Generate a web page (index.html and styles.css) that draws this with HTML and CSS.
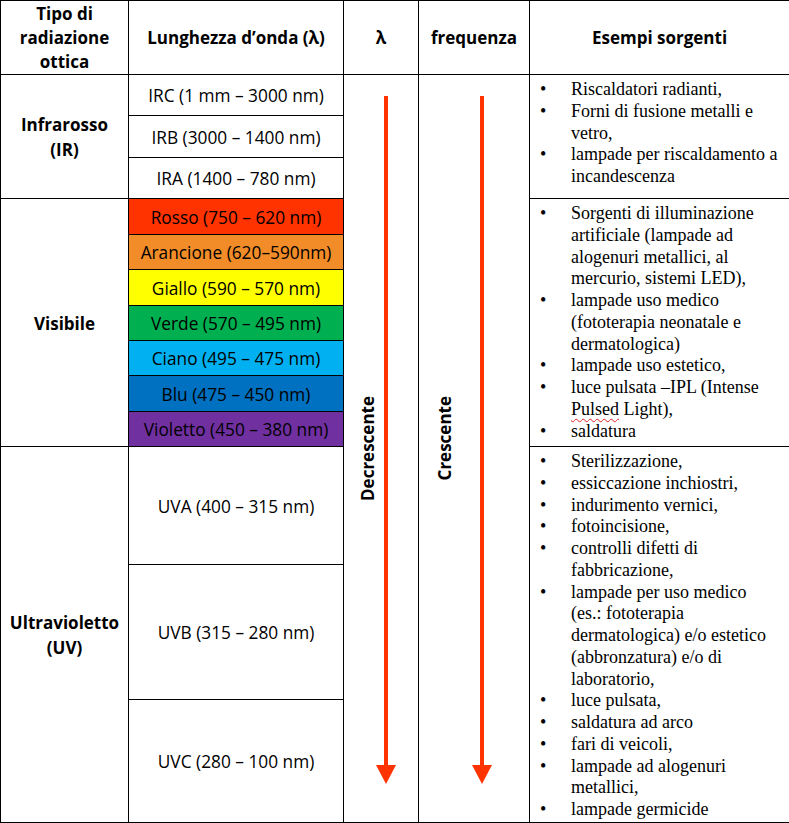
FILE: index.html
```html
<!DOCTYPE html>
<html lang="it">
<head>
<meta charset="utf-8">
<title>Radiazione ottica</title>
<link rel="stylesheet" href="styles.css">
</head>
<body>
<table class="tbl">
  <colgroup>
    <col class="c1"><col class="c2"><col class="c3"><col class="c4"><col class="c5">
  </colgroup>
  <tr class="h-head">
    <th class="head">Tipo di<br>radiazione<br>ottica</th>
    <th class="head">Lunghezza d’onda (λ)</th>
    <th class="head">λ</th>
    <th class="head">frequenza</th>
    <th class="head">Esempi sorgenti</th>
  </tr>
  <tr class="h-ir1">
    <td class="type" rowspan="3">Infrarosso<br>(IR)</td>
    <td class="wl">IRC (1 mm – 3000 nm)</td>
    <td class="dir" rowspan="13">
      <div class="dir-box dir-lambda">
        <span class="vtext">Decrescente</span>
        <svg class="arrow" width="20" height="688" viewBox="0 0 20 688"><rect x="8" y="0" width="4" height="670" fill="#ff3300"/><polygon points="0,669 20,669 10,688" fill="#ff3300"/></svg>
      </div>
    </td>
    <td class="dir" rowspan="13">
      <div class="dir-box dir-freq">
        <span class="vtext vtext-freq">Crescente</span>
        <svg class="arrow" width="20" height="688" viewBox="0 0 20 688"><rect x="8" y="0" width="4" height="670" fill="#ff3300"/><polygon points="0,669 20,669 10,688" fill="#ff3300"/></svg>
      </div>
    </td>
    <td class="src" rowspan="3">
      <ul class="list">
        <li><span>Riscaldatori radianti,</span></li>
        <li><span>Forni di fusione metalli e<br>vetro,</span></li>
        <li><span>lampade per riscaldamento a<br>incandescenza</span></li>
      </ul>
    </td>
  </tr>
  <tr class="h-ir2"><td class="wl">IRB (3000 – 1400 nm)</td></tr>
  <tr class="h-ir3"><td class="wl">IRA (1400 – 780 nm)</td></tr>
  <tr class="h-v36">
    <td class="type" rowspan="7">Visibile</td>
    <td class="wl rosso">Rosso (750 – 620 nm)</td>
    <td class="src" rowspan="7">
      <ul class="list">
        <li><span>Sorgenti di illuminazione<br>artificiale (lampade ad<br>alogenuri metallici, al<br>mercurio, sistemi LED),</span></li>
        <li><span>lampade uso medico<br>(fototerapia neonatale e<br>dermatologica)</span></li>
        <li><span>lampade uso estetico,</span></li>
        <li><span>luce pulsata –IPL (Intense<br><span class="spell">Pulsed</span> Light),</span></li>
        <li><span>saldatura</span></li>
      </ul>
    </td>
  </tr>
  <tr class="h-v35"><td class="wl arancione">Arancione (620–590nm)</td></tr>
  <tr class="h-v36"><td class="wl giallo">Giallo (590 – 570 nm)</td></tr>
  <tr class="h-v35"><td class="wl verde">Verde (570 – 495 nm)</td></tr>
  <tr class="h-v35"><td class="wl ciano">Ciano (495 – 475 nm)</td></tr>
  <tr class="h-v36"><td class="wl blu">Blu (475 – 450 nm)</td></tr>
  <tr class="h-v35"><td class="wl violetto">Violetto (450 – 380 nm)</td></tr>
  <tr class="h-uva">
    <td class="type" rowspan="3">Ultravioletto<br>(UV)</td>
    <td class="wl">UVA (400 – 315 nm)</td>
    <td class="src" rowspan="3">
      <ul class="list">
        <li><span>Sterilizzazione,</span></li>
        <li><span>essiccazione inchiostri,</span></li>
        <li><span>indurimento vernici,</span></li>
        <li><span>fotoincisione,</span></li>
        <li><span>controlli difetti di<br>fabbricazione,</span></li>
        <li><span>lampade per uso medico<br>(es.: fototerapia<br>dermatologica) e/o estetico<br>(abbronzatura) e/o di<br>laboratorio,</span></li>
        <li><span>luce pulsata,</span></li>
        <li><span>saldatura ad arco</span></li>
        <li><span>fari di veicoli,</span></li>
        <li><span>lampade ad alogenuri<br>metallici,</span></li>
        <li><span>lampade germicide</span></li>
      </ul>
    </td>
  </tr>
  <tr class="h-uvb"><td class="wl">UVB (315 – 280 nm)</td></tr>
  <tr class="h-uvc"><td class="wl">UVC (280 – 100 nm)</td></tr>
</table>
</body>
</html>
```
FILE: styles.css
```css
html, body {
  margin: 0;
  padding: 0;
  background: #ffffff;
}

.tbl {
  border-collapse: collapse;
  table-layout: fixed;
  width: 789px;
  color: #000;
  font-family: "Open Sans", "DejaVu Sans", sans-serif;
  font-size: 17.3px;
}

.c1 { width: 128px; }
.c2 { width: 215px; }
.c3 { width: 75px; }
.c4 { width: 111px; }
.c5 { width: 260px; }

.tbl th,
.tbl td {
  border: 1px solid #000;
}

.head {
  font-weight: 700;
  font-size: 17px;
  line-height: 24px;
  text-align: center;
  vertical-align: middle;
  padding: 0 4px;
}

.type {
  font-weight: 700;
  font-size: 17px;
  line-height: 25px;
  text-align: center;
  vertical-align: middle;
  padding: 1px 4px 0;
}

.wl {
  text-align: center;
  vertical-align: middle;
  line-height: 22px;
  padding: 2px 4px 0;
  white-space: nowrap;
}

.h-head { height: 74px; }
.h-ir1 { height: 41px; }
.h-ir2 { height: 42px; }
.h-ir3 { height: 41px; }
.h-v36 { height: 36px; }
.h-v35 { height: 35px; }
.h-uva { height: 118px; }
.h-uvb { height: 135px; }
.h-uvc { height: 123px; }

.rosso { background: #ff3300; }
.arancione { background: #f28c28; }
.giallo { background: #ffff00; }
.verde { background: #00b050; }
.ciano { background: #00b0f0; }
.blu { background: #0070c0; }
.violetto { background: #7030a0; }

.dir {
  vertical-align: top;
  padding: 0;
}

.dir-box {
  display: flex;
  align-items: flex-start;
  padding-top: 21px;
}

.dir-lambda { padding-left: 16px; }
.dir-freq { padding-left: 18px; }

.vtext {
  writing-mode: vertical-rl;
  transform: rotate(180deg);
  font-weight: 700;
  font-size: 17px;
  line-height: 16px;
  margin-top: 300px;
}

.vtext-freq { margin-right: 19px; }

.arrow {
  display: block;
  flex: none;
}

.src {
  vertical-align: top;
  padding: 4px 0 0 10px;
  font-family: "Liberation Serif", "Times New Roman", serif;
  font-size: 18px;
  line-height: 21.75px;
}

.list {
  list-style: none;
  margin: 0;
  padding: 0;
}

.list li {
  display: flex;
  white-space: nowrap;
}

.list li::before {
  content: "•";
  flex: none;
  width: 31px;
}

.spell {
  text-decoration: underline wavy #e02020;
  text-decoration-thickness: 1px;
  text-underline-offset: 3px;
}
```
